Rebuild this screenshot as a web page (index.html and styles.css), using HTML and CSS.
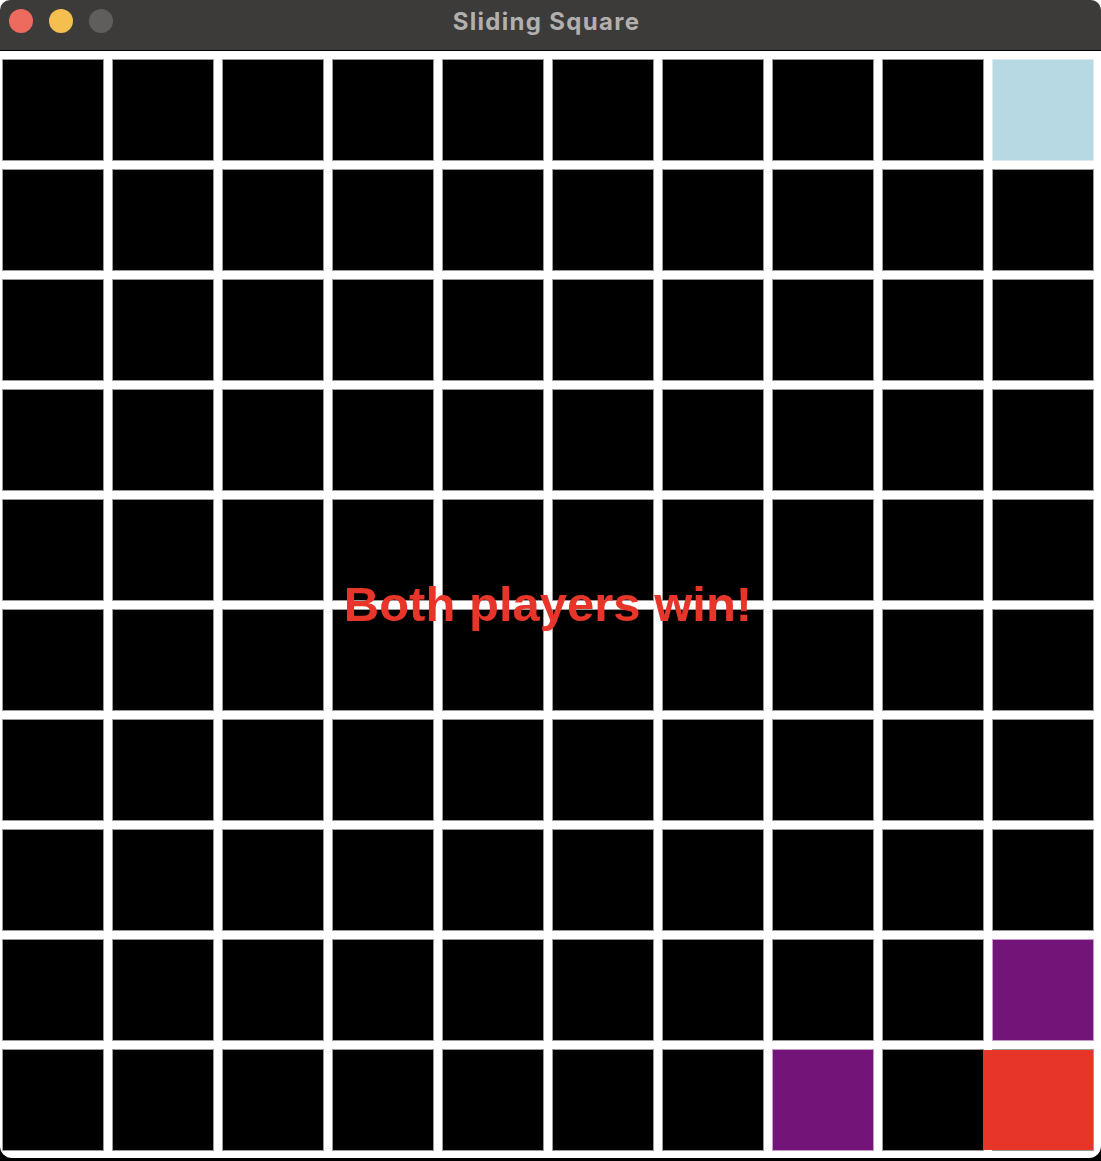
FILE: index.html
```html
<!DOCTYPE html>
<html lang="en">
<head>
	<meta charset="UTF-8">
	<title>Sliding Square</title>
	<link rel="stylesheet" href="styles.css">
</head>
<body>
	<div class="window">
		<div class="titlebar">
			<div class="lights">
				<span class="light red"></span>
				<span class="light yellow"></span>
				<span class="light gray"></span>
			</div>
			<div class="title">Sliding Square</div>
		</div>
		<div class="content">
			<div class="board">
				<div class="cell"></div><div class="cell"></div><div class="cell"></div><div class="cell"></div><div class="cell"></div><div class="cell"></div><div class="cell"></div><div class="cell"></div><div class="cell"></div><div class="cell goal"></div>
				<div class="cell"></div><div class="cell"></div><div class="cell"></div><div class="cell"></div><div class="cell"></div><div class="cell"></div><div class="cell"></div><div class="cell"></div><div class="cell"></div><div class="cell"></div>
				<div class="cell"></div><div class="cell"></div><div class="cell"></div><div class="cell"></div><div class="cell"></div><div class="cell"></div><div class="cell"></div><div class="cell"></div><div class="cell"></div><div class="cell"></div>
				<div class="cell"></div><div class="cell"></div><div class="cell"></div><div class="cell"></div><div class="cell"></div><div class="cell"></div><div class="cell"></div><div class="cell"></div><div class="cell"></div><div class="cell"></div>
				<div class="cell"></div><div class="cell"></div><div class="cell"></div><div class="cell"></div><div class="cell"></div><div class="cell"></div><div class="cell"></div><div class="cell"></div><div class="cell"></div><div class="cell"></div>
				<div class="cell"></div><div class="cell"></div><div class="cell"></div><div class="cell"></div><div class="cell"></div><div class="cell"></div><div class="cell"></div><div class="cell"></div><div class="cell"></div><div class="cell"></div>
				<div class="cell"></div><div class="cell"></div><div class="cell"></div><div class="cell"></div><div class="cell"></div><div class="cell"></div><div class="cell"></div><div class="cell"></div><div class="cell"></div><div class="cell"></div>
				<div class="cell"></div><div class="cell"></div><div class="cell"></div><div class="cell"></div><div class="cell"></div><div class="cell"></div><div class="cell"></div><div class="cell"></div><div class="cell"></div><div class="cell"></div>
				<div class="cell"></div><div class="cell"></div><div class="cell"></div><div class="cell"></div><div class="cell"></div><div class="cell"></div><div class="cell"></div><div class="cell"></div><div class="cell"></div><div class="cell trail"></div>
				<div class="cell"></div><div class="cell"></div><div class="cell"></div><div class="cell"></div><div class="cell"></div><div class="cell"></div><div class="cell"></div><div class="cell trail"></div><div class="cell"></div><div class="cell"></div>
				<!-- player square, caught mid-slide -->
				<div class="player"></div>
				<div class="message">Both players win!</div>
			</div>
		</div>
	</div>
</body>
</html>
```

FILE: styles.css
```css
/* page behind the window */
html, body{
  margin: 0;
  height: 100%;
}
body{
  background: linear-gradient(#ffffff 0, #ffffff 50%, #000000 50%, #000000 100%);
  font-family: "Liberation Sans", Arial, sans-serif;
}
/* window frame */
.window{
  width: 1101px;
  height: 1158px;
  background-color: #ffffff;
  border-radius: 10px 10px 12px 12px;
  overflow: hidden;
}
.titlebar{
  position: relative;
  height: 50px;
  background-color: #3d3b3a;
  border-bottom: 1px solid #000000;
  display: flex;
  align-items: center;
  justify-content: center;
}
.lights{
  position: absolute;
  left: 9px;
  top: 9px;
  display: flex;
  gap: 16px;
}
.light{
  width: 24px;
  height: 24px;
  border-radius: 50%;
}
.light.red{ background-color: #ed6a5e; }
.light.yellow{ background-color: #f5bf4f; }
.light.gray{ background-color: #5f5e5d; }
.title{
  font-family: Inter, "Noto Sans", sans-serif;
  font-size: 24px;
  font-weight: 700;
  letter-spacing: 1.3px;
  color: #b1b0af;
  margin-left: -8px;
  margin-top: -8px;
}
/* game board */
.content{
  padding: 9px 0 0 3px;
}
.board{
  position: relative;
  display: grid;
  grid-template-columns: repeat(10, 100px);
  grid-template-rows: repeat(10, 100px);
  gap: 10px;
  width: 1090px;
}
.cell{
  background-color: #000000;
  box-shadow: 0 0 0 1px #9a9a9a;
}
.cell.goal{
  background-color: #b7d9e3;
  box-shadow: 0 0 0 1px #dbeaf0;
}
.cell.trail{
  background-color: #731478;
  box-shadow: 0 0 0 1px #c79ac9;
}
.player{
  position: absolute;
  left: 980px;
  top: 990px;
  width: 110px;
  height: 100px;
  background-color: #e8352a;
}
.message{
  position: absolute;
  left: 0;
  right: 0;
  top: 516px;
  text-align: center;
  font-size: 49px;
  font-weight: bold;
  line-height: 56px;
  color: #e8352a;
}
```
